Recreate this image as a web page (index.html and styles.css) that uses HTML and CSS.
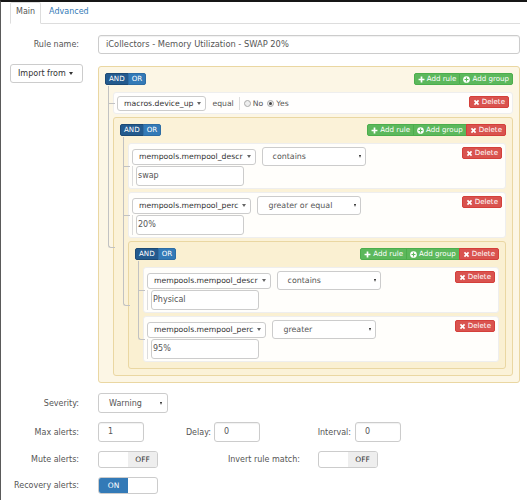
FILE: index.html
```html
<!DOCTYPE html>
<html>
<head>
<meta charset="utf-8">
<link rel="stylesheet" href="styles.css">
</head>
<body>
<div class="page">
  <ul class="tabs">
    <li class="tab active">Main</li>
    <li class="tab link">Advanced</li>
  </ul>

  <div class="row r-name">
    <div class="lbl">Rule name:</div>
    <div class="input name-input">iCollectors - Memory Utilization - SWAP 20%</div>
  </div>

  <div class="row r-builder">
    <div class="import-col"><div class="btn-import">Import from <i class="caret-b"></i></div></div>
    <div class="qb">
      <div class="group">
        <div class="group-header">
          <div class="btn-group"><span class="bt cond active">AND</span><span class="bt cond">OR</span></div>
          <div class="btn-group">
            <span class="bt green"><svg class="ic" viewBox="0 0 10 10"><path d="M3.8 0.8h2.4v3h3v2.4h-3v3H3.8v-3h-3V3.8h3z" fill="#fff"/></svg>Add rule</span>
            <span class="bt green"><svg class="ic" viewBox="0 0 10 10"><circle cx="5" cy="5" r="4.8" fill="#fff"/><path d="M4.2 2.2h1.6v2h2v1.6h-2v2H4.2v-2h-2V4.2h2z" fill="#5cb85c"/></svg>Add group</span>
          </div>
        </div>
        <ul class="rules-list">
          <li class="rule">
            <div class="rule-main">
              <div class="rule-line short">
                <div class="qsel">macros.device_up<i class="caret-s"></i></div>
                <div class="op-text">equal</div>
                <div class="value-c inline">
                  <span class="radio"></span><span class="rlbl">No</span>
                  <span class="radio on"></span><span class="rlbl">Yes</span>
                </div>
              </div>
            </div>
            <span class="bt red"><svg class="ic" viewBox="0 0 10 10"><path d="M1.2 2.9L2.9 1.2L5 3.3L7.1 1.2L8.8 2.9L6.7 5L8.8 7.1L7.1 8.8L5 6.7L2.9 8.8L1.2 7.1L3.3 5z" fill="#fff"/></svg>Delete</span>
          </li>
          <li class="group">
            <div class="group-header">
              <div class="btn-group"><span class="bt cond active">AND</span><span class="bt cond">OR</span></div>
              <div class="btn-group">
                <span class="bt green"><svg class="ic" viewBox="0 0 10 10"><path d="M3.8 0.8h2.4v3h3v2.4h-3v3H3.8v-3h-3V3.8h3z" fill="#fff"/></svg>Add rule</span>
                <span class="bt green"><svg class="ic" viewBox="0 0 10 10"><circle cx="5" cy="5" r="4.8" fill="#fff"/><path d="M4.2 2.2h1.6v2h2v1.6h-2v2H4.2v-2h-2V4.2h2z" fill="#5cb85c"/></svg>Add group</span>
                <span class="bt red"><svg class="ic" viewBox="0 0 10 10"><path d="M1.2 2.9L2.9 1.2L5 3.3L7.1 1.2L8.8 2.9L6.7 5L8.8 7.1L7.1 8.8L5 6.7L2.9 8.8L1.2 7.1L3.3 5z" fill="#fff"/></svg>Delete</span>
              </div>
            </div>
            <ul class="rules-list">
              <li class="rule">
                <div class="rule-main">
                  <div class="rule-line">
                    <div class="qsel">mempools.mempool_descr<i class="caret-s"></i></div>
                    <div class="nsel op">contains<i class="arr"></i></div>
                  </div>
                  <div class="value-c"><div class="val-input">swap</div></div>
                </div>
                <span class="bt red"><svg class="ic" viewBox="0 0 10 10"><path d="M1.2 2.9L2.9 1.2L5 3.3L7.1 1.2L8.8 2.9L6.7 5L8.8 7.1L7.1 8.8L5 6.7L2.9 8.8L1.2 7.1L3.3 5z" fill="#fff"/></svg>Delete</span>
              </li>
              <li class="rule">
                <div class="rule-main">
                  <div class="rule-line">
                    <div class="qsel">mempools.mempool_perc<i class="caret-s"></i></div>
                    <div class="nsel op">greater or equal<i class="arr"></i></div>
                  </div>
                  <div class="value-c"><div class="val-input">20%</div></div>
                </div>
                <span class="bt red"><svg class="ic" viewBox="0 0 10 10"><path d="M1.2 2.9L2.9 1.2L5 3.3L7.1 1.2L8.8 2.9L6.7 5L8.8 7.1L7.1 8.8L5 6.7L2.9 8.8L1.2 7.1L3.3 5z" fill="#fff"/></svg>Delete</span>
              </li>
              <li class="group">
                <div class="group-header">
                  <div class="btn-group"><span class="bt cond active">AND</span><span class="bt cond">OR</span></div>
                  <div class="btn-group">
                    <span class="bt green"><svg class="ic" viewBox="0 0 10 10"><path d="M3.8 0.8h2.4v3h3v2.4h-3v3H3.8v-3h-3V3.8h3z" fill="#fff"/></svg>Add rule</span>
                    <span class="bt green"><svg class="ic" viewBox="0 0 10 10"><circle cx="5" cy="5" r="4.8" fill="#fff"/><path d="M4.2 2.2h1.6v2h2v1.6h-2v2H4.2v-2h-2V4.2h2z" fill="#5cb85c"/></svg>Add group</span>
                    <span class="bt red"><svg class="ic" viewBox="0 0 10 10"><path d="M1.2 2.9L2.9 1.2L5 3.3L7.1 1.2L8.8 2.9L6.7 5L8.8 7.1L7.1 8.8L5 6.7L2.9 8.8L1.2 7.1L3.3 5z" fill="#fff"/></svg>Delete</span>
                  </div>
                </div>
                <ul class="rules-list">
                  <li class="rule">
                    <div class="rule-main">
                      <div class="rule-line">
                        <div class="qsel">mempools.mempool_descr<i class="caret-s"></i></div>
                        <div class="nsel op">contains<i class="arr"></i></div>
                      </div>
                      <div class="value-c"><div class="val-input">Physical</div></div>
                    </div>
                    <span class="bt red"><svg class="ic" viewBox="0 0 10 10"><path d="M1.2 2.9L2.9 1.2L5 3.3L7.1 1.2L8.8 2.9L6.7 5L8.8 7.1L7.1 8.8L5 6.7L2.9 8.8L1.2 7.1L3.3 5z" fill="#fff"/></svg>Delete</span>
                  </li>
                  <li class="rule">
                    <div class="rule-main">
                      <div class="rule-line">
                        <div class="qsel">mempools.mempool_perc<i class="caret-s"></i></div>
                        <div class="nsel op">greater<i class="arr"></i></div>
                      </div>
                      <div class="value-c"><div class="val-input">95%</div></div>
                    </div>
                    <span class="bt red"><svg class="ic" viewBox="0 0 10 10"><path d="M1.2 2.9L2.9 1.2L5 3.3L7.1 1.2L8.8 2.9L6.7 5L8.8 7.1L7.1 8.8L5 6.7L2.9 8.8L1.2 7.1L3.3 5z" fill="#fff"/></svg>Delete</span>
                  </li>
                </ul>
              </li>
            </ul>
          </li>
        </ul>
      </div>
    </div>
  </div>

  <div class="row r-sev">
    <div class="lbl">Severity:</div>
    <div class="nsel sev">Warning<i class="arr"></i></div>
  </div>

  <div class="row r-alerts">
    <div class="lbl">Max alerts:</div>
    <div class="input small">1</div>
    <div class="lbl2 delay">Delay:</div>
    <div class="input small">0</div>
    <div class="lbl2 interval">Interval:</div>
    <div class="input small">0</div>
  </div>

  <div class="row r-toggle">
    <div class="lbl">Mute alerts:</div>
    <div class="toggle"><span class="t-half"></span><span class="t-half t-off">OFF</span></div>
    <div class="lbl2 invert">Invert rule match:</div>
    <div class="toggle"><span class="t-half"></span><span class="t-half t-off">OFF</span></div>
  </div>

  <div class="row r-toggle">
    <div class="lbl">Recovery alerts:</div>
    <div class="toggle"><span class="t-half t-on">ON</span><span class="t-half"></span></div>
  </div>
</div>
</body>
</html>
```
FILE: styles.css
```css
* { box-sizing: border-box; }
html, body { margin: 0; padding: 0; background: #fff; }
body {
  font-family: "DejaVu Sans", Verdana, sans-serif;
  font-size: 8px;
  color: #555;
}
.page {
  height: 500px;
  border-top: 2px solid #161616;
  border-left: 1px solid #5a5a5a;
  padding: 0 7px 0 9px;
  overflow: hidden;
}

/* tabs */
.tabs {
  display: flex;
  gap: 2px;
  list-style: none;
  margin: 0;
  padding: 0;
  height: 22px;
  border-bottom: 1px solid #ddd;
}
.tab {
  height: 22px;
  padding: 0 5px;
  line-height: 18px;
  border: 1px solid transparent;
  border-radius: 2px 2px 0 0;
}
.tab.active {
  border-color: #ddd #ddd transparent;
  background: #fff;
  color: #555;
}
.tab.link { color: #337ab7; }

/* rows */
.row { display: flex; align-items: center; }
.lbl {
  width: 88px;
  flex: none;
  padding-right: 19px;
  text-align: right;
  color: #555;
  white-space: nowrap;
}
.lbl2 { flex: none; text-align: right; color: #555; white-space: nowrap; }
.lbl2.delay { width: 70px; padding-right: 3px; }
.lbl2.interval { width: 95px; padding-right: 4px; }
.lbl2.invert { width: 160px; padding-right: 18px; }

.input {
  height: 19px;
  border: 1px solid #ccc;
  border-radius: 3px;
  padding: 0 7px;
  line-height: 17px;
  color: #555;
  background: #fff;
  white-space: nowrap;
  box-shadow: inset 0 1px 1px rgba(0,0,0,.06);
}
.r-name { margin-top: 11px; height: 19px; }
.name-input { flex: 1; font-size: 8.3px; }

.r-builder { margin-top: 10px; align-items: flex-start; }
.import-col { width: 88px; flex: none; }
.btn-import {
  width: 73px;
  height: 19px;
  border: 1px solid #ccc;
  border-radius: 3px;
  background: #fff;
  color: #333;
  display: flex;
  align-items: center;
  padding-left: 7px;
  gap: 3px;
  white-space: nowrap;
}
.caret-b {
  width: 0; height: 0;
  border-top: 3px solid #333;
  border-left: 2.5px solid transparent;
  border-right: 2.5px solid transparent;
}
.qb { flex: 1; margin-top: 2px; }

/* query builder */
.group {
  border: 1px solid #ead7a2;
  border-radius: 3px;
  background: rgba(250, 238, 204, 0.5);
  padding: 6px 6px 6px 6px;
}
.group-header {
  display: flex;
  justify-content: space-between;
  height: 12px;
}
.btn-group { display: flex; }
.bt {
  height: 12px;
  padding: 0 3px;
  font-size: 7.1px;
  line-height: 10px;
  color: #fff;
  border: 1px solid;
  display: flex;
  align-items: center;
  gap: 2px;
  white-space: nowrap;
  flex: none;
}
.btn-group .bt:first-child { border-radius: 2px 0 0 2px; }
.btn-group .bt:last-child { border-radius: 0 2px 2px 0; }
.btn-group .bt + .bt { margin-left: -1px; }
.bt.cond { background: #337ab7; border-color: #2e6da4; }
.bt.cond.active { background: #235a8e; border-color: #1d4a74; }
.bt.green { background: #5cb85c; border-color: #4cae4c; }
.bt.red { background: #d9534f; border-color: #d43f3a; }
.rule > .bt.red { border-radius: 2px; }
.ic { width: 7px; height: 7px; flex: none; }

.rules-list {
  list-style: none;
  margin: 7px 0 0;
  padding: 0 0 0 8px;
  display: flex;
  flex-direction: column;
  gap: 3px;
}
.rules-list > li { position: relative; }
.rules-list > li::before,
.rules-list > li::after {
  content: '';
  position: absolute;
  left: -6px;
  width: 6px;
  border-color: #c2c2c2;
  border-style: solid;
}
.rules-list > li::before {
  top: -4px;
  height: calc(50% + 4px);
  border-width: 0 0 1px 1px;
}
.rules-list > li::after {
  top: 50%;
  height: calc(50% + 4px);
  border-width: 0 0 0 1px;
}
.rules-list > li:first-child::before { top: -7px; height: calc(50% + 7px); }
.rules-list > li:last-child::before { border-radius: 0 0 0 3px; }
.rules-list > li:last-child::after { display: none; }

.rule {
  display: flex;
  align-items: flex-start;
  background: rgba(255, 255, 255, 0.9);
  border: 1px solid #eee;
  border-radius: 3px;
  padding: 3px 3px 2px;
}
.rule-main { flex: 1; min-width: 0; }
.rule-line { display: flex; align-items: center; gap: 6px; height: 19px; }
.rule-line.short { height: 15px; }

.qsel {
  height: 16px;
  border: 1px solid #ccc;
  border-radius: 3px;
  background: #fff;
  color: #333;
  font-size: 7.7px;
  display: flex;
  align-items: center;
  padding: 0 4px 0 6px;
  gap: 4px;
  white-space: nowrap;
}
.rule-line.short .qsel { height: 15px; }
.caret-s {
  width: 0; height: 0;
  border-top: 3px solid #666;
  border-left: 2px solid transparent;
  border-right: 2px solid transparent;
}
.op-text { color: #555; font-size: 7.7px; margin-left: 0; }
.nsel {
  height: 19px;
  border: 1px solid #ccc;
  border-radius: 3px;
  background: #fff;
  color: #555;
  display: flex;
  align-items: center;
  justify-content: space-between;
  padding: 0 4px 0 10px;
  white-space: nowrap;
}
.nsel.op { width: 104px; font-size: 7.9px; }
.arr {
  width: 0; height: 0;
  border-top: 3px solid #222;
  border-left: 1.5px solid transparent;
  border-right: 1.5px solid transparent;
}
.value-c {
  border-left: 1px solid #ddd;
  padding-left: 3px;
  height: 20px;
}
.value-c.inline {
  height: 13px;
  margin-left: -1px;
  padding-left: 4px;
  display: flex;
  align-items: center;
  gap: 2px;
  font-size: 7.7px;
}
.radio {
  width: 7px; height: 7px;
  border: 1px solid #aaa;
  border-radius: 50%;
  background: #eee;
  position: relative;
}
.radio.on::after {
  content: '';
  position: absolute;
  left: 1px; top: 1px;
  width: 3px; height: 3px;
  border-radius: 50%;
  background: #444;
}
.rlbl { margin-right: 2px; }
.val-input {
  width: 108px;
  height: 20px;
  border: 1px solid #ccc;
  border-radius: 3px;
  background: #fff;
  padding-left: 1px;
  line-height: 18px;
  color: #555;
  font-size: 8px;
}

/* bottom */
.r-sev { margin-top: 10px; }
.nsel.sev { width: 70px; height: 20px; padding-right: 5px; }
.r-alerts { margin-top: 9px; }
.input.small { width: 46px; height: 20px; line-height: 18px; padding-left: 9px; }
.r-toggle { margin-top: 9px; }
.toggle {
  width: 60px;
  height: 17px;
  border: 1px solid #ccc;
  border-radius: 3px;
  display: flex;
  overflow: hidden;
  background: #fff;
  flex: none;
}
.t-half {
  flex: 1;
  display: flex;
  align-items: center;
  justify-content: center;
  font-size: 7.5px;
}
.t-off { background: #eee; color: #333; }
.t-on { background: #337ab7; color: #fff; }
```
